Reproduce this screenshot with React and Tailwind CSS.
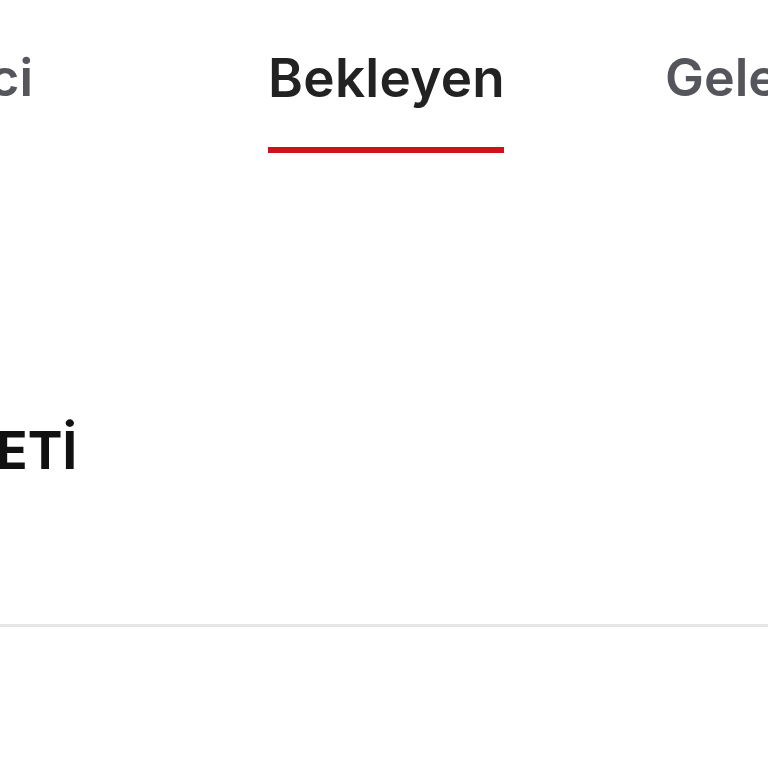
export default function App() {
    return (
        <div className="w-[768px] h-[768px] bg-white overflow-hidden relative" style={{ fontFamily: "Inter, 'Noto Sans', sans-serif" }}>
            {/* Tabs */}
            <div className="flex items-start pt-[46px] h-[200px]">
                <div className="w-[33px] shrink-0 flex justify-end">
                    <span className="whitespace-nowrap text-[52px] leading-[64px] font-semibold text-[#55555c]">Geçici</span>
                </div>
                <div className="ml-[235px] w-[236px] shrink-0 flex flex-col items-stretch">
                    <span className="whitespace-nowrap text-[53px] leading-[64px] tracking-[0.3px] font-semibold text-[#222222]">Bekleyen</span>
                    <div className="mt-[37px] h-[6px] bg-[#d0111b]" />
                </div>
                <div className="ml-[161px] shrink-0">
                    <span className="whitespace-nowrap text-[52px] leading-[64px] font-semibold text-[#55555c]">Gelecek</span>
                </div>
            </div>

            {/* Section title */}
            <div className="mt-[219px] flex">
                <div className="w-[77px] shrink-0 flex justify-end">
                    <span className="whitespace-nowrap text-[52px] leading-[64px] font-bold text-[#111111]">PAKETİ</span>
                </div>
            </div>

            {/* Divider */}
            <div className="mt-[141px] h-[3px] bg-[#e6e6e6]" />
        </div>
    )
}
